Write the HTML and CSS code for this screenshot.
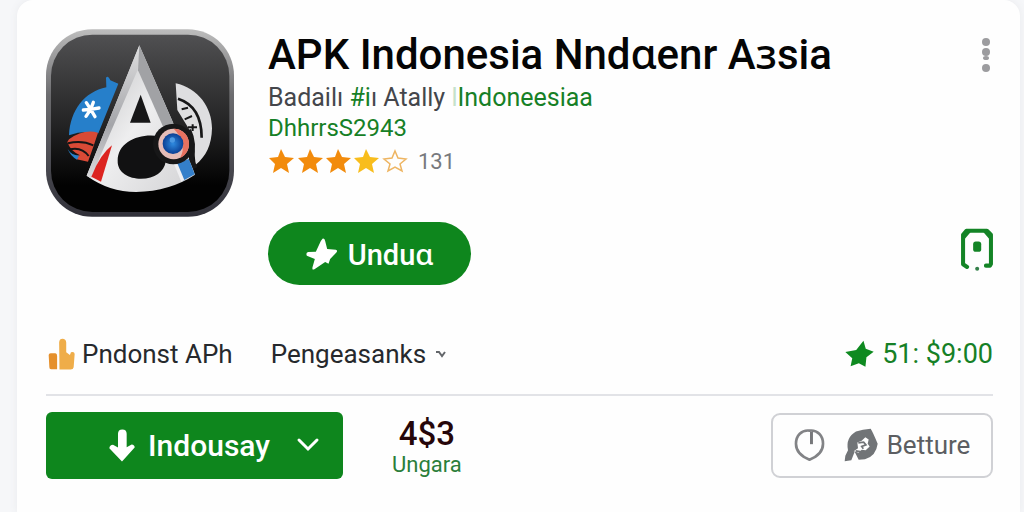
FILE: index.html
```html
<!DOCTYPE html>
<html lang="id">
<head>
    <meta charset="UTF-8">
    <meta name="viewport" content="width=device-width, initial-scale=1.0">
    <title>APK Indonesia</title>
    <link rel="stylesheet" href="styles.css">
</head>
<body>
    <main class="card">
        <!-- App header -->
        <div class="header">
            <svg class="app-icon" viewBox="48 28 564 562" role="img" aria-label="App icon">
                <defs>
                    <linearGradient id="tile" x1="0" y1="0" x2="0" y2="1">
                        <stop offset="0" stop-color="#505052"/>
                        <stop offset="0.5" stop-color="#242425"/>
                        <stop offset="0.85" stop-color="#020202"/>
                    </linearGradient>
                    <linearGradient id="rim" x1="0" y1="0" x2="0" y2="1">
                        <stop offset="0" stop-color="#bdbdbd"/>
                        <stop offset="0.35" stop-color="#6c6c6f"/>
                        <stop offset="1" stop-color="#303039"/>
                    </linearGradient>
                    <linearGradient id="metal" x1="0" y1="0" x2="1" y2="1">
                        <stop offset="0" stop-color="#b8b9bb"/>
                        <stop offset="0.5" stop-color="#eeeeef"/>
                        <stop offset="1" stop-color="#d2d2d4"/>
                    </linearGradient>
                    <linearGradient id="leg" x1="0" y1="0" x2="0" y2="1">
                        <stop offset="0" stop-color="#dededf"/>
                        <stop offset="0.6" stop-color="#a4a5a9"/>
                        <stop offset="1" stop-color="#dcdcde"/>
                    </linearGradient>
                    <radialGradient id="lens">
                        <stop offset="0" stop-color="#2f8be0"/>
                        <stop offset="1" stop-color="#0b3f94"/>
                    </radialGradient>
                </defs>
                <rect x="48" y="28" width="564" height="562" rx="138" fill="url(#rim)"/>
                <rect x="63" y="44" width="535" height="532" rx="124" fill="url(#tile)"/>
                <path d="M117 346C121 270 163 216 229 202L228 173Q234 164 241 181L265 191L205 340Q160 330 117 346Z" fill="#267fca"/>
                <path d="M169 248L182 268L190 247M160 270L182 268L207 264M168 289L182 268L195 290" stroke="#fff" stroke-width="10" stroke-linecap="round" fill="none"/>
                <path d="M117 358Q160 326 204 338L190 380L174 425L140 418L134 408L150 406Q120 392 112 366Z" fill="#d94a36"/>
                <path d="M113 387Q124 406 147 407L141 419Q121 408 113 387Z" fill="#267fca"/>
                <path d="M114 370Q155 360 190 376M120 388Q155 380 176 408" stroke="#151516" stroke-width="6" fill="none"/>
                <path d="M437 190C505 205 546 263 546 325C545 375 528 410 497 434L488 345L442 270Z" fill="#dedee0"/>
                <path d="M444 236Q515 259 515 353" stroke="#171718" stroke-width="8" fill="none"/>
                <path d="M455 268L474 263M464 298L486 288M474 322L501 322M488 313V333" stroke="#171718" stroke-width="6"/>
                <path d="M328 76L170 467Q238 516 318 516Q421 513 495 464L478 417L430 310Z" fill="url(#metal)"/>
                <path d="M328 76L323 150L210 410L185 476L170 467Z" fill="url(#leg)"/>
                <path d="M328 76L430 310L402 326L324 151Z" fill="#a1a2a5"/>
                <path d="M332 224L300 308H362Z" fill="#171718"/>
                <path d="M388 349C330 338 263 365 263 422C262 458 297 476 333 476C374 476 403 454 407 425Z" fill="#111112"/>
                <path d="M246 376L213 485L184 470Q211 402 246 376Z" fill="#dc2420"/>
                <path d="M439 430L477 417L494 463L456 484Z" fill="#347fca"/>
                <path d="M442 430L463 480L454 485L432 432Z" fill="#efeff1"/>
                <path d="M477 330Q496 370 484 418L496 444" stroke="#171718" stroke-width="13" fill="none"/>
                <circle cx="430" cy="372" r="61" fill="#171718"/>
                <circle cx="431" cy="372" r="46" fill="#e5bdb8"/>
                <path d="M431 326A46 46 0 0 1 450 414Q474 370 431 326Z" fill="#e77160"/>
                <circle cx="429" cy="371" r="31" fill="url(#lens)"/>
                <circle cx="427" cy="360" r="8" fill="#4b98e2"/>
            </svg>

            <div class="info">
                <h1>APK Indonesia Nndɑenr Aɜsia</h1>
                <p class="subtitle">Badailı <span class="green">#i</span>ı Atally <a href="#"><span class="faint">l</span>Indoneesiaa</a></p>
                <p class="developer"><a href="#">DhhrrsS2943</a></p>
                <div class="rating">
                    <svg class="stars" viewBox="0 0 140 24" role="img" aria-label="4 stars">
                        <defs>
                            <path id="star" d="M13 0L17 8L26 9L19 15L21 24L13 19L5 24L7 15L1 9L10 8Z"/>
                        </defs>
                        <use href="#star" fill="#f28b0c"/>
                        <use href="#star" x="29" fill="#f28b0c"/>
                        <use href="#star" x="57" fill="#f28b0c"/>
                        <use href="#star" x="85" fill="#f8bd1c"/>
                        <path d="M127 2L130 9L138 10L132 15L134 22L127 18L120 22L122 15L116 10L124 9Z" fill="none" stroke="#eeb562" stroke-width="1.500"/>
                    </svg>
                    <span>131</span>
                </div>
                <button class="install">
                    <svg class="install-icon" viewBox="158 82 95 96" aria-hidden="true">
                        <path d="M207 84Q213 82 215 91L221 115L247 117Q254 120 248 126L230 145L225 159L215 154L184 175Q175 180 177 170L184 145L160 135Q156 127 164 124L187 123L202 91Z" fill="#fff"/>
                    </svg>
                    Unduɑ
                </button>
            </div>

            <div class="side">
                <button class="icon-button" aria-label="More options">
                    <svg class="more-icon" viewBox="0 0 8 36">
                        <g fill="#9c9c9f">
                            <circle cx="4" cy="5" r="4"/>
                            <circle cx="4" cy="15" r="4"/>
                            <ellipse cx="4" cy="21" rx="3" ry="2"/>
                            <circle cx="4" cy="31" r="4"/>
                        </g>
                    </svg>
                </button>
                <button class="icon-button" aria-label="Device">
                    <svg class="device-icon" viewBox="90 624 98 128">
                        <path d="M111 740L99 732V644L109 632H170L182 644V731L179 736H167" fill="none" stroke="#148426" stroke-width="12" stroke-linecap="round" stroke-linejoin="round"/>
                        <path d="M101 652L117 633M164 633L180 652" stroke="#148426" stroke-width="11"/>
                        <rect x="129" y="664" width="24" height="31" rx="8" fill="#148426"/>
                        <circle cx="141" cy="745" r="6" fill="#34804a"/>
                    </svg>
                </button>
            </div>
        </div>

        <!-- Category row -->
        <div class="meta">
            <svg class="thumb-icon" viewBox="55 38 80 94" aria-hidden="true">
                <path d="M57 88Q57 83 63 83H77Q82 84 82 91V130H64Q59 130 59 124Z" fill="#e5902c"/>
                <path d="M88 50Q89 40 98 40Q108 40 109 51V80L120 88L123 80Q133 76 134 85L131 124Q130 131 122 131H89Z" fill="#efad49"/>
            </svg>
            <span class="category">Pndonst APh</span>
            <button class="menu">
                Pengeasanks
                <svg class="small-chevron" viewBox="0 0 10 8" aria-hidden="true">
                    <path d="M0 2H3L6 6L9 2" fill="none" stroke="#63666a" stroke-width="2"/>
                </svg>
            </button>
            <div class="price">
                <svg class="price-star" viewBox="253 42 88 84" aria-hidden="true">
                    <path d="M309 44L316 68L340 77L318 94L315 123L295 112L270 121L275 97L254 78L287 72Z" fill="#0e8a20"/>
                </svg>
                <span>51: $9:00</span>
            </div>
        </div>

        <!-- Actions -->
        <div class="actions">
            <button class="primary">
                <svg class="arrow-icon" viewBox="234 82 78 98" aria-hidden="true">
                    <path d="M274 83Q287 83 287 96V136L302 128Q311 129 311 137L273 179L235 139Q236 130 246 129L261 137V96Q261 83 274 83Z" fill="#fff"/>
                </svg>
                <span>Indousay</span>
                <svg class="chevron-icon" viewBox="0 0 24 16" aria-hidden="true">
                    <path d="M3 3L12 12L21 3" fill="none" stroke="#fff" stroke-width="3" stroke-linecap="round"/>
                </svg>
            </button>
            <div class="count">
                <strong>4$3</strong>
                <span>Ungara</span>
            </div>
            <button class="secondary">
                <svg class="clock-icon" viewBox="88 307 92 97" aria-hidden="true">
                    <path d="M134 312C158 309 175 327 175 352C175 377 157 391 134 400C111 391 93 377 93 352C93 327 110 309 134 312Z" fill="none" stroke="#828386" stroke-width="8"/>
                    <path d="M140 315V353" stroke="#77787b" stroke-width="9"/>
                </svg>
                <svg class="leaf-icon" viewBox="238 305 102 101" aria-hidden="true">
                    <path d="M318 307Q324 316 339 352Q334 390 301 398L282 400L270 376L260 401L240 404L242 388L250 371Q242 334 274 315Q294 309 318 307Z" fill="#717477"/>
                    <path d="M278 348L291 343L302 332L312 339L309 352L315 360L303 371L291 370L282 379L267 374L280 365Z" fill="#fff"/>
                    <path d="M281 349L297 347L304 355L291 360L296 367M273 373L291 376" fill="none" stroke="#717477" stroke-width="5"/>
                </svg>
                <span>Betture</span>
            </button>
        </div>
    </main>
</body>
</html>
```

FILE: styles.css
```css
* {
    box-sizing: border-box;
}

body {
    margin: 0;
    padding: 0 4px 0 17px;
    background-color: #f6f7f9;
    font-family: Roboto, "Noto Sans", Arial, sans-serif;
    color: #26292d;
}

h1, p {
    margin: 0;
}

svg {
    display: block;
    flex-shrink: 0;
}

a {
    color: #168026;
    text-decoration: none;
}

button {
    display: flex;
    align-items: center;
    padding: 0;
    border: none;
    background: none;
    color: inherit;
    font-family: inherit;
    cursor: pointer;
}

.card {
    min-height: 100vh;
    padding: 29px 27px 34px 29px;
    border-radius: 16px 16px 0 0;
    background-color: #fefefe;
    box-shadow: 0 0 8px #e9eaed;
}

.header {
    display: flex;
}

.app-icon {
    width: 188px;
    height: 188px;
    margin-right: 34px;
}

.info {
    flex-grow: 1;
    padding-top: 2px;
}

h1 {
    margin-bottom: 4px;
    color: #050505;
    font-size: 42px;
    font-weight: 500;
    line-height: 48px;
}

.subtitle {
    color: #44464b;
    font-size: 25px;
    line-height: 30px;
}

.green {
    color: #168026;
}

.faint {
    color: #c5e2cb;
}

.developer {
    font-size: 24px;
    line-height: 30px;
}

.rating {
    display: flex;
    align-items: center;
    gap: 10px;
    height: 28px;
    margin: 4px 0 47px;
    color: #77797d;
    font-size: 22px;
}

.stars {
    width: 140px;
    height: 24px;
}

.install {
    justify-content: center;
    gap: 10px;
    width: 203px;
    height: 63px;
    border-radius: 32px;
    background-color: #0e861d;
    color: white;
    font-size: 29px;
    font-weight: 500;
}

.install-icon {
    width: 32px;
    height: 32px;
}

.side {
    display: flex;
    flex-direction: column;
    justify-content: space-between;
    align-items: flex-end;
    padding: 8px 0 14px;
}

.more-icon {
    width: 8px;
    height: 36px;
    margin-right: 3px;
}

.device-icon {
    width: 33px;
    height: 43px;
}

.meta {
    display: flex;
    align-items: center;
    height: 111px;
    padding-top: 29px;
    border-bottom: 2px solid #e2e3e7;
    font-size: 26px;
}

.thumb-icon {
    width: 27px;
    height: 32px;
    margin: 0 7px 0 2px;
}

.menu {
    gap: 10px;
    margin-left: 38px;
    font-size: 26px;
}

.small-chevron {
    width: 10px;
    height: 8px;
}

.price {
    display: flex;
    align-items: center;
    gap: 8px;
    margin-left: auto;
    color: #168026;
    font-size: 27px;
}

.price-star {
    width: 29px;
    height: 28px;
}

.actions {
    display: flex;
    align-items: center;
    padding-top: 15px;
}

.primary {
    justify-content: flex-end;
    width: 297px;
    height: 67px;
    padding-right: 23px;
    border-radius: 6px;
    background-color: #0e861d;
    color: white;
    font-size: 30px;
    font-weight: 500;
}

.arrow-icon {
    width: 26px;
    height: 33px;
    margin-right: 13px;
}

.chevron-icon {
    width: 24px;
    height: 16px;
    margin-left: 26px;
}

.count {
    display: flex;
    flex-direction: column;
    align-items: center;
    margin-left: 49px;
    padding-top: 6px;
    color: #2b7e3a;
    font-size: 22px;
    line-height: 28px;
}

.count strong {
    color: #260609;
    font-size: 33px;
    font-weight: 500;
    line-height: 34px;
}

.secondary {
    justify-content: center;
    width: 222px;
    height: 65px;
    margin-left: auto;
    border: 2px solid #d0d1d5;
    border-radius: 9px;
    color: #5c5e62;
    font-size: 26px;
}

.clock-icon {
    width: 31px;
    height: 32px;
    margin-right: 19px;
}

.leaf-icon {
    width: 34px;
    height: 34px;
    margin-right: 9px;
}
```
